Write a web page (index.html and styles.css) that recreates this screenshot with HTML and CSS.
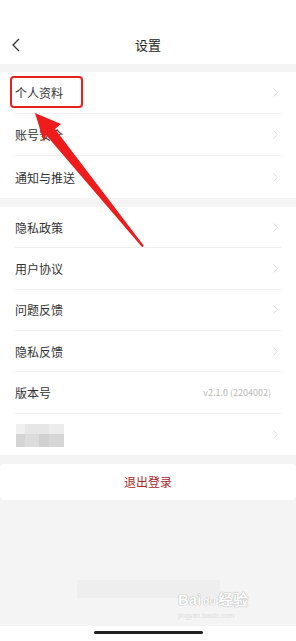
FILE: index.html
```html
<!DOCTYPE html>
<html lang="zh-CN">
<head>
<meta charset="utf-8">
<title>设置</title>
<link rel="stylesheet" href="styles.css">
</head>
<body>
<div class="page">
  <header class="header">
    <div class="bar">
      <svg class="back" width="10" height="14" viewBox="0 0 10 14"><path d="M8 1 L2 7 L8 13" fill="none" stroke="#333" stroke-width="1.3"/></svg>
      <div class="title">设置</div>
    </div>
  </header>

  <section class="group g1">
    <div class="row"><span class="label">个人资料</span><svg class="chev" width="5" height="9" viewBox="0 0 5 9"><path d="M0.5 0.5 L4.3 4.5 L0.5 8.5" fill="none" stroke="#d2d2d2" stroke-width="0.8"/></svg></div>
    <div class="row"><span class="label">账号安全</span><svg class="chev" width="5" height="9" viewBox="0 0 5 9"><path d="M0.5 0.5 L4.3 4.5 L0.5 8.5" fill="none" stroke="#d2d2d2" stroke-width="0.8"/></svg></div>
    <div class="row"><span class="label">通知与推送</span><svg class="chev" width="5" height="9" viewBox="0 0 5 9"><path d="M0.5 0.5 L4.3 4.5 L0.5 8.5" fill="none" stroke="#d2d2d2" stroke-width="0.8"/></svg></div>
  </section>

  <section class="group g2">
    <div class="row"><span class="label">隐私政策</span><svg class="chev" width="5" height="9" viewBox="0 0 5 9"><path d="M0.5 0.5 L4.3 4.5 L0.5 8.5" fill="none" stroke="#d2d2d2" stroke-width="0.8"/></svg></div>
    <div class="row"><span class="label">用户协议</span><svg class="chev" width="5" height="9" viewBox="0 0 5 9"><path d="M0.5 0.5 L4.3 4.5 L0.5 8.5" fill="none" stroke="#d2d2d2" stroke-width="0.8"/></svg></div>
    <div class="row"><span class="label">问题反馈</span><svg class="chev" width="5" height="9" viewBox="0 0 5 9"><path d="M0.5 0.5 L4.3 4.5 L0.5 8.5" fill="none" stroke="#d2d2d2" stroke-width="0.8"/></svg></div>
    <div class="row"><span class="label">隐私反馈</span><svg class="chev" width="5" height="9" viewBox="0 0 5 9"><path d="M0.5 0.5 L4.3 4.5 L0.5 8.5" fill="none" stroke="#d2d2d2" stroke-width="0.8"/></svg></div>
    <div class="row"><span class="label">版本号</span><span class="version">v2.1.0 (2204002)</span></div>
    <div class="row">
      <div class="mosaic">
        <div class="mrow top"><i class="m1"></i><i class="m2"></i><i class="m3"></i></div>
        <div class="mrow bot"><i class="m4"></i><i class="m5"></i><i class="m6"></i><i class="m7"></i></div>
      </div>
      <svg class="chev" width="5" height="9" viewBox="0 0 5 9"><path d="M0.5 0.5 L4.3 4.5 L0.5 8.5" fill="none" stroke="#d8d8d8" stroke-width="0.8"/></svg>
    </div>
  </section>

  <div class="logout">退出登录</div>

  <div class="spacer">
    <div class="toast"></div>
  </div>

  <footer class="home"><div class="indicator"></div></footer>

  <div class="watermark"><span class="wm-big">Bai<span class="paw">du</span>经验</span><span class="wm-small">jingyan.baidu.com</span></div>

  <div class="highlight"></div>
  <svg class="arrow" width="296" height="641" viewBox="0 0 296 641">
    <polygon points="35,113 61,124 55,129 144,246 142,247 46,135 44,142" fill="#ee1c1c"/>
  </svg>
</div>
</body>
</html>
```

FILE: styles.css
```css
html, body {
  margin: 0;
  padding: 0;
}
body {
  background: #f4f4f4;
  font-family: "Noto Sans CJK SC", "Noto Sans", sans-serif;
  color: #333;
}
.page {
  position: relative;
  width: 296px;
  height: 641px;
  display: flex;
  flex-direction: column;
  overflow: hidden;
}
.header {
  background: #fff;
  height: 64px;
  box-sizing: border-box;
  padding-top: 32px;
}
.bar {
  position: relative;
  height: 26px;
  display: flex;
  align-items: center;
  justify-content: center;
}
.back {
  position: absolute;
  left: 11px;
  top: 6px;
}
.title {
  font-size: 13px;
  color: #222;
  line-height: 26px;
}
.group {
  background: #fff;
}
.g1 { margin-top: 8px; }
.g2 { margin-top: 9px; }
.row {
  margin: 0 15px;
  box-sizing: border-box;
  border-bottom: 1px solid #efefef;
  display: flex;
  align-items: center;
  justify-content: space-between;
}
.row:last-child { border-bottom: none; }
.g1 .row { height: 42px; }
.g2 .row { height: 41.33px; }
.label {
  font-size: 12px;
  color: #333;
}
.chev {
  margin-right: 3px;
}
.version {
  font-size: 9px;
  color: #bbb;
  margin-right: 10px;
}
.mosaic {
  display: flex;
  flex-direction: column;
  margin-left: 1px;
  margin-top: 2px;
}
.mrow {
  display: flex;
}
.mrow i { display: block; }
.mrow.top { height: 10px; }
.mrow.bot { height: 13px; }
.m1 { width: 9px; background: #f0f0f0; }
.m2 { width: 24px; background: #e6e6e6; }
.m3 { width: 15px; background: #ececec; }
.m4 { width: 9px; background: #d4d4d4; }
.m5 { width: 14px; background: #dcdcdc; }
.m6 { width: 10px; background: #d0d0d0; }
.m7 { width: 15px; background: #d6d6d6; }
.logout {
  margin-top: 9px;
  height: 36px;
  background: #fff;
  border-radius: 4px;
  display: flex;
  align-items: center;
  justify-content: center;
  font-size: 12px;
  color: #a8282c;
}
.spacer {
  flex: 1;
  display: flex;
  justify-content: center;
}
.toast {
  margin-top: 80px;
  width: 143px;
  height: 18px;
  background: #ececec;
  opacity: 0.8;
}
.home {
  height: 15px;
  background: #fff;
  display: flex;
  justify-content: center;
  padding-top: 5px;
  box-sizing: border-box;
}
.indicator {
  width: 109px;
  height: 3px;
  border-radius: 2px;
  background: #222;
}
.watermark {
  position: absolute;
  left: 178px;
  top: 592px;
  display: flex;
  flex-direction: column;
  color: #fff;
  font-family: "Liberation Sans", sans-serif;
  text-shadow: 0 0 1px #aaa, 0 0 1px #aaa;
}
.wm-big {
  font-size: 15px;
  font-weight: bold;
  line-height: 16px;
}
.paw {
  font-size: 10px;
  margin: 0 2px;
}
.wm-small {
  font-size: 7px;
  color: #ddd;
  text-shadow: none;
  margin-top: 2px;
}
.highlight {
  position: absolute;
  left: 10px;
  top: 76px;
  width: 73px;
  height: 32px;
  box-sizing: border-box;
  border: 2.5px solid #e8201f;
  border-radius: 4px;
}
.arrow {
  position: absolute;
  left: 0;
  top: 0;
  pointer-events: none;
}
```
